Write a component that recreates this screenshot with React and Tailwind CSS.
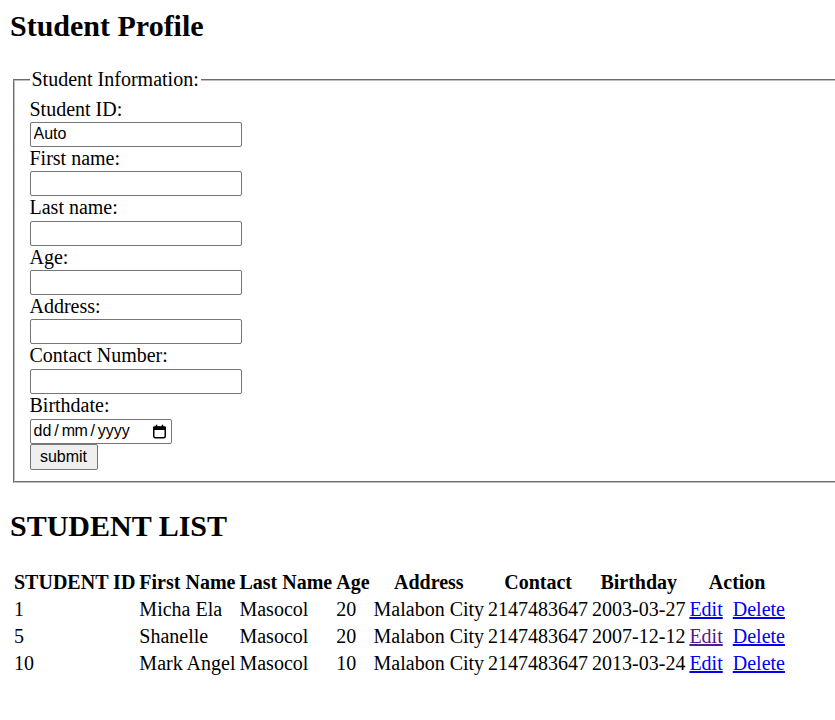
import React from "react";

const rows = [
  { id: "1", first: "Micha Ela", last: "Masocol", age: "20", addr: "Malabon City", contact: "2147483647", bday: "2003-03-27", visited: false },
  { id: "5", first: "Shanelle", last: "Masocol", age: "20", addr: "Malabon City", contact: "2147483647", bday: "2007-12-12", visited: true },
  { id: "10", first: "Mark Angel", last: "Masocol", age: "10", addr: "Malabon City", contact: "2147483647", bday: "2013-03-24", visited: false },
];

const fields = ["First name:", "Last name:", "Age:", "Address:", "Contact Number:"];

function TextInput({ value }) {
  return (
    <input
      type="text"
      readOnly
      defaultValue={value || ""}
      className="block mt-[1.4px] w-[212px] h-[25px] border border-[#767676] rounded-[2px] px-[3px] bg-white text-black text-[16px] font-['Liberation_Sans',sans-serif] outline-none"
    />
  );
}

export default function App() {
  return (
    <div className="w-full overflow-hidden bg-white text-black font-['Liberation_Serif',serif] text-[20px] leading-[23px] px-[10px] pb-[40px]">
      <h2 className="mt-[8.5px] text-[30px] leading-[34.5px] font-bold">Student Profile</h2>

      <fieldset className="mt-[25px] ml-[2.5px] mr-[-60px] border-2 [border-style:groove] border-[#c0c0c0] px-[15px] pt-[6.5px] pb-[11.5px]">
        <legend className="px-[2px] leading-[23px]">Student Information:</legend>

        <div className="h-[23px]">Student ID:</div>
        <TextInput value="Auto" />

        {fields.map((f) => (
          <React.Fragment key={f}>
            <div className="h-[23px]">{f}</div>
            <TextInput />
          </React.Fragment>
        ))}

        <div className="h-[23px]">Birthdate:</div>
        <div className="mt-[2px] w-[142px] h-[25px] border border-[#767676] rounded-[2px] flex items-center pl-[3px] pr-[4px] bg-white font-['Liberation_Sans',sans-serif] text-[16px] leading-[18px]">
          <span>dd</span>
          <span className="mx-[3px]">/</span>
          <span className="tracking-[-0.5px]">mm</span>
          <span className="mx-[3px]">/</span>
          <span>yyyy</span>
          <svg className="ml-auto" width="15" height="15" viewBox="0 0 15 15" aria-hidden="true">
            <rect x="1.75" y="3" width="11.5" height="10.75" rx="1.5" fill="none" stroke="black" strokeWidth="1.5" />
            <rect x="1" y="2.5" width="13" height="3.5" rx="1" fill="black" />
            <rect x="3.75" y="0.75" width="1.5" height="3" fill="black" />
            <rect x="9.75" y="0.75" width="1.5" height="3" fill="black" />
          </svg>
        </div>
        <button
          type="button"
          className="block w-[68px] h-[26px] border border-[#767676] rounded-[2px] bg-[#efefef] text-black text-[16px] leading-[18px] font-['Liberation_Sans',sans-serif]"
        >
          submit
        </button>
      </fieldset>

      <h2 className="mt-[25.6px] text-[30px] leading-[34.5px] font-bold">STUDENT LIST</h2>

      <table className="mt-[24.6px] ml-[1px] border-separate border-spacing-x-[2.6px] border-spacing-y-[2.6px]">
        <thead>
          <tr>
            {["STUDENT ID", "First Name", "Last Name", "Age", "Address", "Contact", "Birthday", "Action"].map((h) => (
              <th key={h} className="p-[1px] font-bold text-center whitespace-nowrap">{h}</th>
            ))}
          </tr>
        </thead>
        <tbody>
          {rows.map((r) => (
            <tr key={r.id}>
              <td className="p-[1px]">{r.id}</td>
              <td className="p-[1px] whitespace-nowrap">{r.first}</td>
              <td className="p-[1px]">{r.last}</td>
              <td className="p-[1px]">{r.age}</td>
              <td className="p-[1px] whitespace-nowrap">{r.addr}</td>
              <td className="p-[1px]">{r.contact}</td>
              <td className="p-[1px]">{r.bday}</td>
              <td className="p-[1px] whitespace-nowrap">
                <a href="#" className={r.visited ? "underline text-[#551a8b]" : "underline text-[#0000ee]"}>Edit</a>
                {"\u00a0 "}
                <a href="#" className="underline text-[#0000ee]">Delete</a>
              </td>
            </tr>
          ))}
        </tbody>
      </table>
    </div>
  );
}
